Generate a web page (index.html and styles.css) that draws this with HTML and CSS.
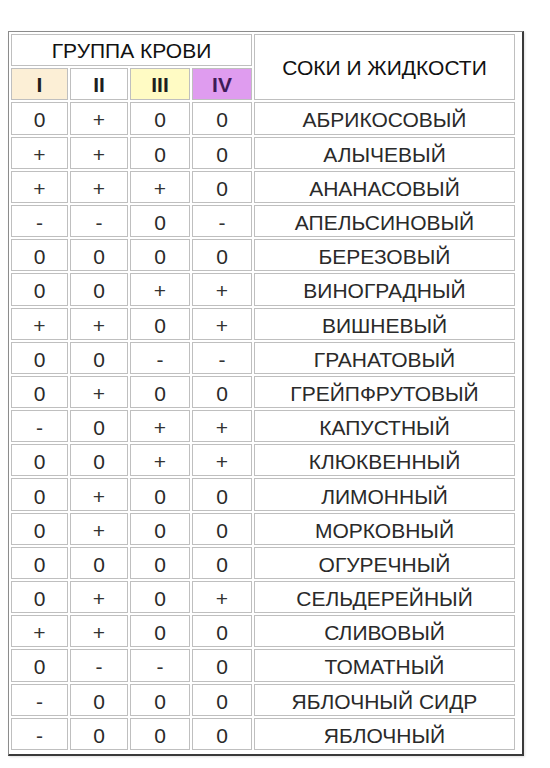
FILE: index.html
```html
<!DOCTYPE html>
<html lang="ru">
<head>
<meta charset="utf-8">
<title>Группа крови — соки и жидкости</title>
<link rel="stylesheet" href="styles.css">
</head>
<body>
<div class="frame">
<table class="grid">
  <colgroup>
    <col class="c1"><col class="c2"><col class="c3"><col class="c4"><col class="c5">
  </colgroup>
  <tr class="head">
    <td colspan="4" class="h">ГРУППА КРОВИ</td>
    <td rowspan="2" class="h">СОКИ И ЖИДКОСТИ</td>
  </tr>
  <tr class="head">
    <td class="g g1">I</td>
    <td class="g g2">II</td>
    <td class="g g3">III</td>
    <td class="g g4">IV</td>
  </tr>
  <tr><td>0</td><td class="s">+</td><td>0</td><td>0</td><td>АБРИКОСОВЫЙ</td></tr>
  <tr><td class="s">+</td><td class="s">+</td><td>0</td><td>0</td><td>АЛЫЧЕВЫЙ</td></tr>
  <tr><td class="s">+</td><td class="s">+</td><td class="s">+</td><td>0</td><td>АНАНАСОВЫЙ</td></tr>
  <tr><td class="s">-</td><td class="s">-</td><td>0</td><td class="s">-</td><td>АПЕЛЬСИНОВЫЙ</td></tr>
  <tr><td>0</td><td>0</td><td>0</td><td>0</td><td>БЕРЕЗОВЫЙ</td></tr>
  <tr><td>0</td><td>0</td><td class="s">+</td><td class="s">+</td><td>ВИНОГРАДНЫЙ</td></tr>
  <tr><td class="s">+</td><td class="s">+</td><td>0</td><td class="s">+</td><td>ВИШНЕВЫЙ</td></tr>
  <tr><td>0</td><td>0</td><td class="s">-</td><td class="s">-</td><td>ГРАНАТОВЫЙ</td></tr>
  <tr><td>0</td><td class="s">+</td><td>0</td><td>0</td><td>ГРЕЙПФРУТОВЫЙ</td></tr>
  <tr><td class="s">-</td><td>0</td><td class="s">+</td><td class="s">+</td><td>КАПУСТНЫЙ</td></tr>
  <tr><td>0</td><td>0</td><td class="s">+</td><td class="s">+</td><td>КЛЮКВЕННЫЙ</td></tr>
  <tr><td>0</td><td class="s">+</td><td>0</td><td>0</td><td>ЛИМОННЫЙ</td></tr>
  <tr><td>0</td><td class="s">+</td><td>0</td><td>0</td><td>МОРКОВНЫЙ</td></tr>
  <tr><td>0</td><td>0</td><td>0</td><td>0</td><td>ОГУРЕЧНЫЙ</td></tr>
  <tr><td>0</td><td class="s">+</td><td>0</td><td class="s">+</td><td>СЕЛЬДЕРЕЙНЫЙ</td></tr>
  <tr><td class="s">+</td><td class="s">+</td><td>0</td><td>0</td><td>СЛИВОВЫЙ</td></tr>
  <tr><td>0</td><td class="s">-</td><td class="s">-</td><td>0</td><td>ТОМАТНЫЙ</td></tr>
  <tr><td class="s">-</td><td>0</td><td>0</td><td>0</td><td>ЯБЛОЧНЫЙ СИДР</td></tr>
  <tr><td class="s">-</td><td>0</td><td>0</td><td>0</td><td>ЯБЛОЧНЫЙ</td></tr>
</table>
</div>
</body>
</html>
```
FILE: styles.css
```css
html, body {
  background: #ffffff;
}
body {
  margin: 0;
  padding: 31px 0 0 8px;
  font-family: "Liberation Sans", Arial, sans-serif;
}
.frame {
  display: inline-block;
  border-style: solid;
  border-width: 1px 2px 2px 1px;
  border-color: #8c8c8c #3a3a3a #3a3a3a #8c8c8c;
  padding: 0 5px 2px 0;
  box-shadow: 1px 1px 2px rgba(0, 0, 0, 0.12);
}
.grid {
  border-collapse: separate;
  border-spacing: 2px;
  table-layout: fixed;
  width: 508px;
  font-size: 21px;
  color: #2a2a2a;
}
.c1 { width: 57px; }
.c2 { width: 58px; }
.c3 { width: 60px; }
.c4 { width: 60px; }
.c5 { width: 261px; }
.grid tr {
  height: 32.2px;
}
.grid td {
  border: 1px solid #bfbfbf;
  padding: 4px 0 0 0;
  text-align: center;
  vertical-align: middle;
  white-space: nowrap;
  line-height: 24px;
}
.grid td.h {
  color: #111111;
  font-size: 21px;
  padding-top: 2px;
}
.grid td.g {
  color: #1e1e1e;
  font-weight: bold;
  padding-top: 2px;
}
.g1 { background: #fcefd6; }
.g2 { background: #ffffff; }
.g3 { background: #fffbc4; }
.g4 { background: #df9cef; }
.grid td.g4 { color: #3e1a58; }
.grid td.s {
  color: #333333;
}
```
